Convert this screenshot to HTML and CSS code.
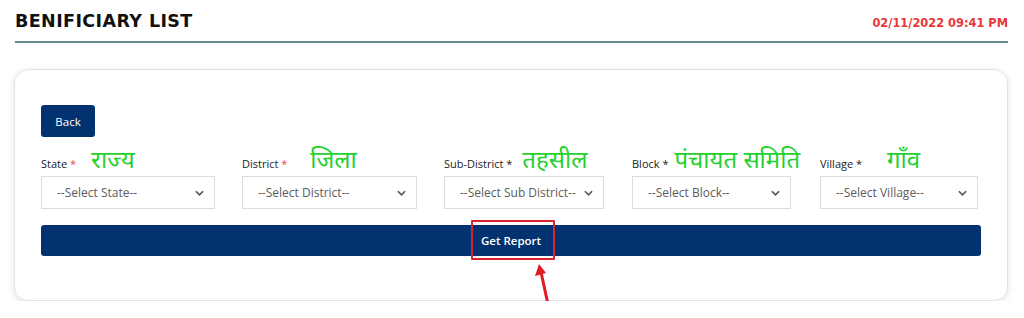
FILE: index.html
```html
<!DOCTYPE html>
<html lang="en">
<head>
<meta charset="utf-8">
<title>Benificiary List</title>
<link rel="stylesheet" href="styles.css">
</head>
<body>
<header class="page-head">
  <h1 class="page-title">BENIFICIARY LIST</h1>
  <span class="page-date">02/11/2022 09:41 PM</span>
</header>

<section class="card">
  <button class="btn btn-back" type="button">Back</button>

  <div class="fields">
    <div class="field">
      <div class="label-row"><span class="lbl">State <span class="req">*</span></span><span class="hindi h-state">राज्य</span></div>
      <div class="select"><span>--Select State--</span><svg class="chev" viewBox="0 0 10 6" width="9" height="6"><path d="M1 1 L5 5 L9 1" fill="none" stroke="#555" stroke-width="1.8"/></svg></div>
    </div>
    <div class="field">
      <div class="label-row"><span class="lbl">District <span class="req">*</span></span><span class="hindi h-district">जिला</span></div>
      <div class="select"><span>--Select District--</span><svg class="chev" viewBox="0 0 10 6" width="9" height="6"><path d="M1 1 L5 5 L9 1" fill="none" stroke="#555" stroke-width="1.8"/></svg></div>
    </div>
    <div class="field">
      <div class="label-row"><span class="lbl">Sub-District *</span><span class="hindi h-sub">तहसील</span></div>
      <div class="select"><span>--Select Sub District--</span><svg class="chev" viewBox="0 0 10 6" width="9" height="6"><path d="M1 1 L5 5 L9 1" fill="none" stroke="#555" stroke-width="1.8"/></svg></div>
    </div>
    <div class="field">
      <div class="label-row"><span class="lbl">Block *</span><span class="hindi h-block">पंचायत समिति</span></div>
      <div class="select"><span>--Select Block--</span><svg class="chev" viewBox="0 0 10 6" width="9" height="6"><path d="M1 1 L5 5 L9 1" fill="none" stroke="#555" stroke-width="1.8"/></svg></div>
    </div>
    <div class="field">
      <div class="label-row"><span class="lbl">Village *</span><span class="hindi h-village">गाँव</span></div>
      <div class="select"><span>--Select Village--</span><svg class="chev" viewBox="0 0 10 6" width="9" height="6"><path d="M1 1 L5 5 L9 1" fill="none" stroke="#555" stroke-width="1.8"/></svg></div>
    </div>
  </div>

  <div class="report-wrap">
    <button class="btn btn-report" type="button">Get Report</button>
    <span class="highlight"></span>
    <svg class="arrow" viewBox="0 0 30 50" width="30" height="50">
      <path d="M18 46 L10 9" stroke="#e01b22" stroke-width="3" fill="none" stroke-linecap="round"/>
      <path d="M8 1 L4 13 L15 10 Z" fill="#e01b22"/>
    </svg>
  </div>
</section>
</body>
</html>
```

FILE: styles.css
```css
* { box-sizing: border-box; }

body {
  margin: 0;
  background: #ffffff;
  font-family: "Open Sans", "Noto Sans", sans-serif;
  color: #222;
}

.page-head {
  margin: 0 16px 0 15px;
  height: 43px;
  display: flex;
  justify-content: space-between;
  align-items: flex-start;
  border-bottom: 2px solid #6a8794;
}

.page-title {
  margin: 11px 0 0 0;
  font-family: "DejaVu Sans", Verdana, sans-serif;
  font-weight: bold;
  font-size: 17.5px;
  letter-spacing: 0.4px;
  color: #111;
}

.page-date {
  margin-top: 16px;
  font-family: "DejaVu Sans", Verdana, sans-serif;
  font-weight: bold;
  font-size: 11.4px;
  color: #e8373a;
}

.card {
  margin: 26px 16px 0 14px;
  height: 232px;
  border: 1px solid #e3e3e3;
  border-radius: 14px;
  box-shadow: 0 2px 6px rgba(0,0,0,0.12);
  padding: 35px 26px 0 26px;
}

.btn {
  border: 0;
  color: #fff;
  font-family: "Open Sans", "Noto Sans", sans-serif;
  cursor: pointer;
}

.btn-back {
  display: block;
  width: 54px;
  height: 32px;
  border-radius: 3px;
  background: #023370;
  font-size: 11.5px;
  padding: 0;
}

.fields {
  display: grid;
  grid-template-columns: 174px 175px 160px 160px 160px;
  column-gap: 27px;
  margin-top: 10px;
}

.field:nth-child(4) { margin-left: 1px; }
.field:nth-child(5) { margin-left: 2px; }

.label-row {
  display: flex;
  align-items: flex-end;
  height: 29px;
  margin-bottom: 0;
}

.lbl {
  font-size: 11px;
  color: #222;
  line-height: 14px;
  margin-bottom: 5px;
  white-space: nowrap;
}

.req { color: #e84a4a; }

.hindi {
  font-family: "Noto Sans Devanagari", "Lohit Devanagari", "Noto Sans", sans-serif;
  font-size: 24px;
  line-height: 28px;
  color: #24d12e;
  white-space: nowrap;
}

.h-state { margin-left: 15px; }
.h-district { margin-left: 23px; }
.h-sub { margin-left: 10px; }
.h-block { margin-left: 6px; }
.h-village { margin-left: 25px; }

.select {
  height: 33px;
  border: 1px solid #dcdcdc;
  display: flex;
  align-items: center;
  justify-content: space-between;
  padding: 0 10px 0 15px;
  font-size: 12px;
  color: #5c5c5c;
  white-space: nowrap;
}

.chev { flex: none; }

.report-wrap {
  position: relative;
  margin-top: 16px;
}

.btn-report {
  display: block;
  width: 940px;
  height: 31px;
  border-radius: 3px;
  background: #023370;
  font-size: 11.5px;
  font-weight: 600;
  padding: 0;
}

.highlight {
  position: absolute;
  left: 430px;
  top: -5px;
  width: 84px;
  height: 40px;
  border: 2px solid #d9232d;
  border-radius: 1px;
  pointer-events: none;
}

.arrow {
  position: absolute;
  left: 490px;
  top: 38px;
}
```
